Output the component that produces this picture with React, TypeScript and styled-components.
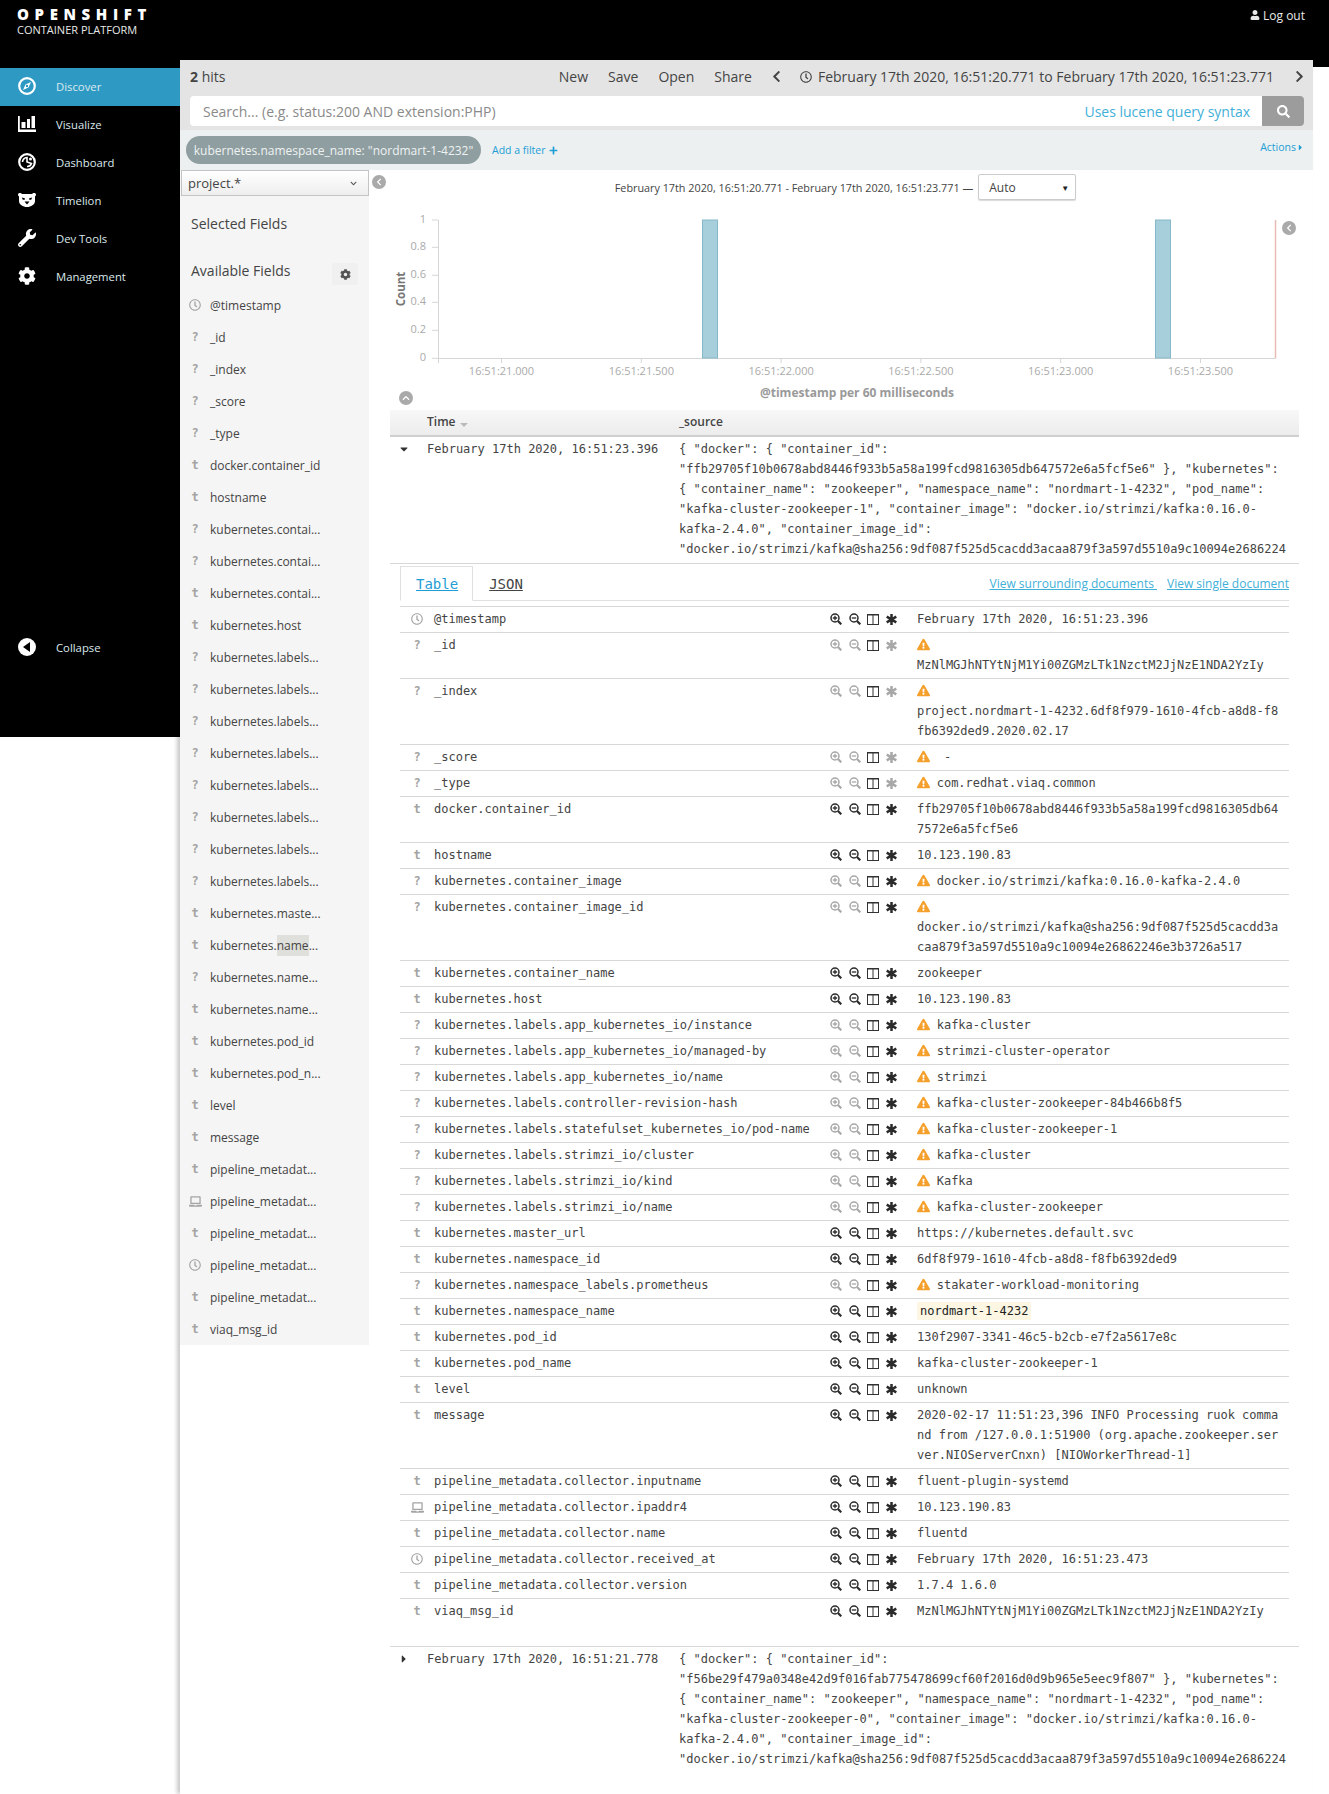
import React from 'react';
import styled, { createGlobalStyle } from 'styled-components';
import {
  FaCaretDown, FaCaretRight, FaChevronDown, FaChevronLeft, FaChevronRight,
  FaCog, FaExclamationTriangle, FaLaptop, FaPlus, FaRegClock, FaSearch, FaUser, FaWrench,
} from 'react-icons/fa';

const MONO = '"DejaVu Sans Mono", monospace';

const Global = createGlobalStyle`
  html, body { margin: 0; padding: 0; background: #fff; }
  body { font-family: "Open Sans", sans-serif; color: #444; font-size: 12px; }
  * { box-sizing: border-box; }
`;

const Page = styled.div`width: 1329px; height: 1794px; display: flex; flex-direction: column; overflow: hidden;`;
const TopBar = styled.header`
  height: 60px; flex: none; background: #000; color: #fff; display: flex; justify-content: space-between; position: relative;
  &::after { content: ''; position: absolute; right: 0; top: 60px; width: 16px; height: 7px; background: #000; }
`;
const Logo = styled.div`padding: 5px 0 0 17px;`;
const LogoMain = styled.div`font-weight: 800; font-size: 15px; letter-spacing: 5.6px; line-height: 18px;`;
const LogoSub = styled.div`font-size: 11px; line-height: 13px; color: #e8e8e8;`;
const Logout = styled.div`display: flex; align-items: center; gap: 3px; font-size: 12px; color: #e8e8e8; padding: 3px 24px 0 0; height: 27px;`;

const Body = styled.div`display: flex; align-items: flex-start; flex: 1;`;
const Nav = styled.nav`
  width: 180px; height: 677px; background: #000; padding-top: 8px; position: relative; z-index: 2; flex: none;
`;
const NavItem = styled.div<{ $active?: boolean }>`
  height: 38px; padding-bottom: 2px; display: grid; grid-template-columns: 56px 1fr; align-items: center; color: #dce9ee; font-size: 11.3px;
  background: ${p => (p.$active ? '#2e9ac4' : 'transparent')};
  svg { margin-left: 18px; display: block; }
`;
const NavCollapse = styled(NavItem)`margin-top: 333px;`;

const Content = styled.main`width: 1133px; flex: none; box-shadow: -3px 0 4px rgba(0,0,0,.22); height: 1734px; background: #fff;`;
const ToolRow = styled.div`height: 36px; background: #e4e4e4; display: flex; align-items: center; padding: 0 7px 3px 10px; font-size: 14px; color: #444;`;
const Hits = styled.div`flex: 1; b { font-weight: 700; }`;
const ToolLink = styled.span`margin-right: 20px;`;
const ShareLink = styled(ToolLink)`margin-right: 18px;`;
const ToolChevron = styled.span`display: flex; color: #444;`;
const TimeRange = styled.span`display: flex; align-items: center; gap: 6px; margin: 0 19px 0 17px;`;
const SearchRow = styled.div`background: #e4e4e4; padding: 0 9px 4px 10px; height: 34px;`;
const SearchBox = styled.div`height: 30px; background: #fff; border-radius: 4px; display: flex; align-items: center;`;
const Placeholder = styled.span`flex: 1; padding-left: 13px; font-size: 14px; color: #8a8a8a;`;
const Lucene = styled.span`font-size: 14px; color: #3fb0d8; margin-right: 12px;`;
const SearchBtn = styled.span`width: 42px; height: 30px; background: #9c9c9c; color: #fff; display: flex; align-items: center; justify-content: center; border-radius: 0 4px 4px 0;`;
const FilterBar = styled.div`height: 40px; background: #ecf0f1; display: flex; align-items: center; padding: 0 8px 0 6px;`;
const Pill = styled.span`height: 28px; width: 295px; border-radius: 14px; background: #8f9ea0; color: #eef2f3; font-size: 12px; display: flex; align-items: center; justify-content: center; white-space: nowrap;`;
const AddFilter = styled.span`margin-left: 11px; font-size: 10.5px; color: #1f9ed6; display: flex; align-items: center; gap: 3px; flex: 1;`;
const Actions = styled.span`font-size: 10.5px; color: #1f9ed6; display: flex; align-items: center; margin-top: -6px;`;

const Split = styled.div`display: flex; align-items: flex-start;`;
const Side = styled.aside`width: 189px; flex: none; background: #f5f5f5; height: 1175px;`;
const IndexSelect = styled.div`
  height: 26px; margin-left: 1px; border: 1px solid #c4c4c4; background: linear-gradient(#fff, #eee); color: #444;
  display: flex; align-items: center; justify-content: space-between; padding: 0 11px 0 6px; font-size: 13px;
`;
const SideTitle = styled.div`font-size: 14px; line-height: 20px; height: 20px; padding-left: 11px; color: #444; display: flex; justify-content: space-between; align-items: center;`;
const SelectedTitle = styled(SideTitle)`margin-top: 18px;`;
const AvailableTitle = styled(SideTitle)`margin-top: 27px; margin-bottom: 8px; padding-right: 11px;`;
const GearBtn = styled.span`width: 26px; height: 22px; margin-top: 6px; background: #f0f0f0; border-radius: 3px; display: flex; align-items: center; justify-content: center; color: #555;`;
const FieldList = styled.div`display: flex; flex-direction: column;`;
const FieldItem = styled.div`height: 32px; display: grid; grid-template-columns: 30px 1fr; align-items: center; font-size: 12px; color: #444;`;
const TypeMark = styled.span`display: flex; justify-content: center; font-family: ${MONO}; font-size: 12px; font-weight: 700; color: #a4a4a4; line-height: 20px; height: 20px; align-items: center;`;
const FieldHl = styled.span`display: inline-block; background: #dfdfdb; line-height: 21px; width: 32px;`;

const Main = styled.div`flex: 1; min-width: 0; padding: 0 14px 0 21px; position: relative;`;
const RoundBtn = styled.span`
  position: absolute; width: 14px; height: 14px; border-radius: 50%; background: #aaa; color: #fff;
  display: flex; align-items: center; justify-content: center;
`;
const CollapseLeft = styled(RoundBtn)`left: 3px; top: 5px;`;
const CollapseRight = styled(RoundBtn)`right: 17px; top: 51px;`;
const CollapseUp = styled(RoundBtn)`left: 30px; top: 221px;`;
const ChartHead = styled.div`height: 34px; padding-left: 2px; display: flex; justify-content: center; align-items: center; font-size: 10.8px; gap: 3px; color: #444;`;
const IntervalSelect = styled.div`
  width: 98px; height: 26px; margin-left: 2px; border: 1px solid #ccc; border-radius: 2px; box-shadow: 0 1px 1px rgba(0,0,0,.15); background: #fff; font-size: 12px;
  display: flex; align-items: center; justify-content: space-between; padding: 0 6px 0 10px;
  span { font-size: 8px; color: #222; }
`;
const Chart = styled.svg`display: block; width: 909px; height: 206px;`;

const TableHead = styled.div`
  height: 27px; padding-bottom: 2px; display: grid; grid-template-columns: 37px 252px 1fr; align-items: center; font-size: 12px; font-weight: 600; color: #444;
  background: linear-gradient(#f8f8f8, #ececec); border-bottom: 2px solid #cfcfcf;
`;
const SortArrow = styled.span`display: inline-block; margin-left: 4px; width: 0; height: 0; border: 4px solid transparent; border-top: 4px solid #bbb; border-bottom-width: 0; vertical-align: -1px;`;
const DocRow = styled.div`display: grid; grid-template-columns: 37px 252px 1fr; padding: 2px 0 4px; font-family: ${MONO}; font-size: 12px; line-height: 20px; color: #444; border-bottom: 1px solid #d8d8d8;`;
const DocRowPlain = styled(DocRow)`border-bottom: 0; border-top: 1px solid #d8d8d8;`;
const SourceText = styled.span`padding-right: 10px;`;
const Caret = styled.span`display: flex; align-items: center; padding-left: 8px; height: 20px; color: #333;`;
const Detail = styled.div`padding: 2px 10px 0; height: 1082px;`;
const TabsRow = styled.div`height: 35px; display: flex; align-items: stretch; border-bottom: 1px solid #e0e0e0; margin-bottom: 5px;`;
const Tab = styled.span<{ $active?: boolean }>`
  font-family: ${MONO}; font-size: 14px; text-decoration: underline; display: flex; align-items: center; height: 35px;
  padding: ${p => (p.$active ? '0 14px 0 15px' : '0 15px')};
  color: ${p => (p.$active ? '#1f9ed6' : '#444')};
  border: 1px solid ${p => (p.$active ? '#e0e0e0' : 'transparent')};
  border-bottom: ${p => (p.$active ? '1px solid #fff' : '0')};
`;
const TabLinks = styled.div`margin-left: auto; display: flex; gap: 10px; align-items: center; font-size: 12px; color: #3fb0d8; text-decoration: underline; white-space: pre;`;
const DetailRow = styled.div`
  display: grid; grid-template-columns: 34px 396px 87px 1fr; border-top: 1px solid #d8d8d8; padding: 2px 0 3px;
  font-family: ${MONO}; font-size: 12px; line-height: 20px; color: #444;
`;
const FieldName = styled.span`white-space: nowrap;`;
const IconGroup = styled.span`display: flex; align-items: center; height: 20px;`;
const IconSlot = styled.span<{ $dim?: boolean }>`display: flex; width: 18.6px; color: ${p => (p.$dim ? '#a8a8a8' : '#2b2b2b')}; svg { display: block; }`;
const Value = styled.span`display: block; width: 362px;`;
const ValueText = styled.span`display: inline-block; max-width: 100%; word-break: break-all; white-space: pre-wrap; vertical-align: top;`;
const Warn = styled.span`display: inline-block; width: 19.7px; height: 20px; color: #f5a02c; vertical-align: top; padding-top: 3px; svg { display: block; }`;
const Mark = styled.span`display: inline-block; background: #fcf6e3; color: #222; padding: 0 3px; line-height: 18px; margin-top: 1px;`;

/* drawings */
const CompassIcon = () => (
  <svg width="18" height="18" viewBox="0 0 18 18" fill="none">
    <circle cx="9" cy="9" r="7.8" stroke="#fff" strokeWidth="2.2" />
    <path d="M13 5l-2.500 5.500L5 13l2.500-5.500z" fill="#fff" />
    <circle cx="9" cy="9" r="1.200" fill="#2e9ac4" />
  </svg>
);
const BarsIcon = () => (
  <svg width="18" height="16" viewBox="0 0 18 16" fill="#fff">
    <path d="M0 0h1.800v13.500H18V16H0z" />
    <path d="M3.500 6h4v6h-4zM9 3h3v9H9zM13.500 0h3.500v12h-3.500z" />
  </svg>
);
const DashIcon = () => (
  <svg width="18" height="18" viewBox="0 0 18 18" fill="none">
    <circle cx="9" cy="9" r="7.800" stroke="#fff" strokeWidth="2.200" />
    <circle cx="12.500" cy="6" r="1.500" fill="#fff" />
    <path d="M4.500 9A4.500 4.500 0 0 1 9 4.500V9l4.500 1.500A4.500 4.500 0 0 1 9 13.500" stroke="#fff" strokeWidth="1.600" />
  </svg>
);
const BearIcon = () => (
  <svg width="18" height="14" viewBox="0 0 18 14">
    <path d="M0 1.500C0 .5 1 0 2 0c1 0 1.500.5 2 1h10c.5-.5 1-1 2-1s2 .5 2 1.500c0 1-.5 1.500-1 2V8c0 3.500-4 6-8 6S1 11.500 1 8V3.500C.5 3 0 2.500 0 1.500z" fill="#fff" />
    <path d="M3.800 4.500l3 .8v1.500h-2zM14.200 4.500l-3 .8v1.500h2z" fill="#000" />
    <path d="M6.500 8.500h5L9 11.500z" fill="#000" />
  </svg>
);
const CollapseIcon = () => (
  <svg width="18" height="18" viewBox="0 0 18 18">
    <circle cx="9" cy="9" r="9" fill="#fff" />
    <path d="M5 9l7-5v10z" fill="#000" />
  </svg>
);
const ZoomIcon = ({ plus }: { plus?: boolean }) => (
  <svg width="12" height="12" viewBox="0 0 12 12" fill="none" stroke="currentColor">
    <circle cx="5" cy="5" r="4" strokeWidth="1.500" />
    <path d="M8 8l3.300 3.300" strokeWidth="2.200" />
    <path d={plus ? 'M2.800 5h4.400M5 2.800v4.400' : 'M2.800 5h4.400'} strokeWidth="1.300" />
  </svg>
);
const ColumnsIcon = () => (
  <svg width="12" height="11" viewBox="0 0 12 11" fill="none" stroke="#333" strokeWidth="1">
    <rect x=".5" y=".5" width="11" height="10" />
    <path d="M6 .5v10" />
    <path d="M.5 1h11" />
  </svg>
);
const StarIcon = () => (
  <svg width="11" height="11" viewBox="0 0 11 11" fill="none" stroke="currentColor" strokeWidth="2.500">
    <path d="M5.500 0v11M.7 2.700l9.600 5.600M.7 8.300l9.600-5.600" />
  </svg>
);

type Kind = 't' | '?' | 'clock' | 'laptop';
const KindIcon = ({ kind }: { kind: Kind }) => (
  <TypeMark>
    {kind === 'clock' ? <FaRegClock size={12} /> : kind === 'laptop' ? <FaLaptop size={13} /> : kind}
  </TypeMark>
);

const sideFields: [Kind, string][] = [
  ['clock', '@timestamp'], ['?', '_id'], ['?', '_index'], ['?', '_score'], ['?', '_type'],
  ['t', 'docker.container_id'], ['t', 'hostname'], ['?', 'kubernetes.contai...'], ['?', 'kubernetes.contai...'],
  ['t', 'kubernetes.contai...'], ['t', 'kubernetes.host'],
  ['?', 'kubernetes.labels...'], ['?', 'kubernetes.labels...'], ['?', 'kubernetes.labels...'], ['?', 'kubernetes.labels...'],
  ['?', 'kubernetes.labels...'], ['?', 'kubernetes.labels...'], ['?', 'kubernetes.labels...'], ['?', 'kubernetes.labels...'],
  ['t', 'kubernetes.maste...'], ['t', 'HL'], ['?', 'kubernetes.name...'], ['t', 'kubernetes.name...'],
  ['t', 'kubernetes.pod_id'], ['t', 'kubernetes.pod_n...'], ['t', 'level'], ['t', 'message'],
  ['t', 'pipeline_metadat...'], ['laptop', 'pipeline_metadat...'], ['t', 'pipeline_metadat...'],
  ['clock', 'pipeline_metadat...'], ['t', 'pipeline_metadat...'], ['t', 'viaq_msg_id'],
];

type Row = { k: Kind; n: string; v: string; warn?: boolean; dim?: boolean; dimStar?: boolean; mark?: boolean };
const MSG = 'MzNlMGJhNTYtNjM1Yi00ZGMzLTk1NzctM2JjNzE1NDA2YzIy';
const L = 'kubernetes.labels.';
const rows: Row[] = [
  { k: 'clock', n: '@timestamp', v: 'February 17th 2020, 16:51:23.396' },
  { k: '?', n: '_id', v: MSG, warn: true, dim: true, dimStar: true },
  { k: '?', n: '_index', v: 'project.nordmart-1-4232.6df8f979-1610-4fcb-a8d8-f8fb6392ded9.2020.02.17', warn: true, dim: true, dimStar: true },
  { k: '?', n: '_score', v: ' -', warn: true, dim: true, dimStar: true },
  { k: '?', n: '_type', v: 'com.redhat.viaq.common', warn: true, dim: true, dimStar: true },
  { k: 't', n: 'docker.container_id', v: 'ffb29705f10b0678abd8446f933b5a58a199fcd9816305db647572e6a5fcf5e6' },
  { k: 't', n: 'hostname', v: '10.123.190.83' },
  { k: '?', n: 'kubernetes.container_image', v: 'docker.io/strimzi/kafka:0.16.0-kafka-2.4.0', warn: true, dim: true },
  { k: '?', n: 'kubernetes.container_image_id', v: 'docker.io/strimzi/kafka@sha256:9df087f525d5cacdd3acaa879f3a597d5510a9c10094e26862246e3b3726a517', warn: true, dim: true },
  { k: 't', n: 'kubernetes.container_name', v: 'zookeeper' },
  { k: 't', n: 'kubernetes.host', v: '10.123.190.83' },
  { k: '?', n: L + 'app_kubernetes_io/instance', v: 'kafka-cluster', warn: true, dim: true },
  { k: '?', n: L + 'app_kubernetes_io/managed-by', v: 'strimzi-cluster-operator', warn: true, dim: true },
  { k: '?', n: L + 'app_kubernetes_io/name', v: 'strimzi', warn: true, dim: true },
  { k: '?', n: L + 'controller-revision-hash', v: 'kafka-cluster-zookeeper-84b466b8f5', warn: true, dim: true },
  { k: '?', n: L + 'statefulset_kubernetes_io/pod-name', v: 'kafka-cluster-zookeeper-1', warn: true, dim: true },
  { k: '?', n: L + 'strimzi_io/cluster', v: 'kafka-cluster', warn: true, dim: true },
  { k: '?', n: L + 'strimzi_io/kind', v: 'Kafka', warn: true, dim: true },
  { k: '?', n: L + 'strimzi_io/name', v: 'kafka-cluster-zookeeper', warn: true, dim: true },
  { k: 't', n: 'kubernetes.master_url', v: 'https://kubernetes.default.svc' },
  { k: 't', n: 'kubernetes.namespace_id', v: '6df8f979-1610-4fcb-a8d8-f8fb6392ded9' },
  { k: '?', n: 'kubernetes.namespace_labels.prometheus', v: 'stakater-workload-monitoring', warn: true, dim: true },
  { k: 't', n: 'kubernetes.namespace_name', v: 'nordmart-1-4232', mark: true },
  { k: 't', n: 'kubernetes.pod_id', v: '130f2907-3341-46c5-b2cb-e7f2a5617e8c' },
  { k: 't', n: 'kubernetes.pod_name', v: 'kafka-cluster-zookeeper-1' },
  { k: 't', n: 'level', v: 'unknown' },
  { k: 't', n: 'message', v: '2020-02-17 11:51:23,396 INFO Processing ruok command from /127.0.0.1:51900 (org.apache.zookeeper.server.NIOServerCnxn) [NIOWorkerThread-1]' },
  { k: 't', n: 'pipeline_metadata.collector.inputname', v: 'fluent-plugin-systemd' },
  { k: 'laptop', n: 'pipeline_metadata.collector.ipaddr4', v: '10.123.190.83' },
  { k: 't', n: 'pipeline_metadata.collector.name', v: 'fluentd' },
  { k: 'clock', n: 'pipeline_metadata.collector.received_at', v: 'February 17th 2020, 16:51:23.473' },
  { k: 't', n: 'pipeline_metadata.collector.version', v: '1.7.4 1.6.0' },
  { k: 't', n: 'viaq_msg_id', v: MSG },
];

const source = (id: string, pod: string) =>
  `{ "docker": { "container_id": "${id}" }, "kubernetes": { "container_name": "zookeeper", "namespace_name": "nordmart-1-4232", "pod_name": "${pod}", "container_image": "docker.io/strimzi/kafka:0.16.0-kafka-2.4.0", "container_image_id": "docker.io/strimzi/kafka@sha256:9df087f525d5cacdd3acaa879f3a597d5510a9c10094e2686224`;

const yTicks: [string, number][] = [['1', 16], ['0.8', 43.3], ['0.6', 71.3], ['0.4', 98.3], ['0.2', 126.3], ['0', 154.3]];
const xTicks = ['16:51:21.000', '16:51:21.500', '16:51:22.000', '16:51:22.500', '16:51:23.000', '16:51:23.500'];

const ChartDrawing = () => (
  <Chart viewBox="0 0 909 206">
    <g stroke="#d6d6d6" fill="none">
      <path d="M48.500 16v138.500H886" />
      {yTicks.map(([l, y]) => <path key={l} d={`M42 ${y}h6`} />)}
      <path d="M48.500 154v5" />
      {xTicks.map((t, i) => <path key={t} d={`M${111.5 + i * 139.8} 154v5`} />)}
    </g>
    <rect x="312.500" y="16" width="15" height="138" fill="#a7cedb" stroke="#86b8c9" />
    <rect x="765.500" y="16" width="15" height="138" fill="#a7cedb" stroke="#86b8c9" />
    <path d="M885.500 16v138" stroke="#e8bcb5" strokeWidth="1.500" />
    <g fontFamily="Open Sans" fontSize="11" fill="#aaa">
      {yTicks.map(([l, y]) => <text key={l} x="36" y={y + 3} textAnchor="end">{l}</text>)}
      {xTicks.map((t, i) => <text key={t} x={111.5 + i * 139.8} y="171" textAnchor="middle">{t}</text>)}
    </g>
    <text x="0" y="0" transform="translate(15 85) rotate(-90)" textAnchor="middle" fontFamily="Open Sans" fontSize="11.5" fontWeight="700" fill="#777">Count</text>
    <text x="467" y="193" textAnchor="middle" fontFamily="Open Sans" fontSize="12" fontWeight="700" fill="#999">@timestamp per 60 milliseconds</text>
  </Chart>
);

export default function App() {
  return (
    <Page>
      <Global />
      <TopBar>
        <Logo>
          <LogoMain>OPENSHIFT</LogoMain>
          <LogoSub>CONTAINER PLATFORM</LogoSub>
        </Logo>
        <Logout><FaUser size={10} />Log out</Logout>
      </TopBar>
      <Body>
        <Nav>
          <NavItem $active><CompassIcon /><span>Discover</span></NavItem>
          <NavItem><BarsIcon /><span>Visualize</span></NavItem>
          <NavItem><DashIcon /><span>Dashboard</span></NavItem>
          <NavItem><BearIcon /><span>Timelion</span></NavItem>
          <NavItem><FaWrench size={18} color="#fff" /><span>Dev Tools</span></NavItem>
          <NavItem><FaCog size={18} color="#fff" /><span>Management</span></NavItem>
          <NavCollapse><CollapseIcon /><span>Collapse</span></NavCollapse>
        </Nav>
        <Content>
          <ToolRow>
            <Hits><b>2</b> hits</Hits>
            <ToolLink>New</ToolLink>
            <ToolLink>Save</ToolLink>
            <ToolLink>Open</ToolLink>
            <ShareLink>Share</ShareLink>
            <ToolChevron><FaChevronLeft size={13} /></ToolChevron>
            <TimeRange><FaRegClock size={12} />February 17th 2020, 16:51:20.771 to February 17th 2020, 16:51:23.771</TimeRange>
            <ToolChevron><FaChevronRight size={13} /></ToolChevron>
          </ToolRow>
          <SearchRow>
            <SearchBox>
              <Placeholder>Search... (e.g. status:200 AND extension:PHP)</Placeholder>
              <Lucene>Uses lucene query syntax</Lucene>
              <SearchBtn><FaSearch size={13} /></SearchBtn>
            </SearchBox>
          </SearchRow>
          <FilterBar>
            <Pill>kubernetes.namespace_name: "nordmart-1-4232"</Pill>
            <AddFilter>Add a filter <FaPlus size={9} /></AddFilter>
            <Actions>Actions<FaCaretRight size={9} /></Actions>
          </FilterBar>
          <Split>
            <Side>
              <IndexSelect>project.*<FaChevronDown size={7} color="#555" /></IndexSelect>
              <SelectedTitle>Selected Fields</SelectedTitle>
              <AvailableTitle>Available Fields<GearBtn><FaCog size={11} /></GearBtn></AvailableTitle>
              <FieldList>
                {sideFields.map(([k, n], i) => (
                  <FieldItem key={i}>
                    <KindIcon kind={k} />
                    {n === 'HL' ? <span>kubernetes.<FieldHl>name</FieldHl>...</span> : <span>{n}</span>}
                  </FieldItem>
                ))}
              </FieldList>
            </Side>
            <Main>
              <CollapseLeft><FaChevronLeft size={8} /></CollapseLeft>
              <CollapseRight><FaChevronLeft size={8} /></CollapseRight>
              <CollapseUp><FaChevronDown size={8} style={{ transform: 'rotate(180deg)' }} /></CollapseUp>
              <ChartHead>
                February 17th 2020, 16:51:20.771 - February 17th 2020, 16:51:23.771 —
                <IntervalSelect>Auto<span>▼</span></IntervalSelect>
              </ChartHead>
              <ChartDrawing />
              <TableHead>
                <span />
                <span>Time<SortArrow /></span>
                <span>_source</span>
              </TableHead>
              <DocRow>
                <Caret><FaCaretDown size={12} /></Caret>
                <span>February 17th 2020, 16:51:23.396</span>
                <SourceText>{source('ffb29705f10b0678abd8446f933b5a58a199fcd9816305db647572e6a5fcf5e6', 'kafka-cluster-zookeeper-1')}</SourceText>
              </DocRow>
              <Detail>
                <TabsRow>
                  <Tab $active>Table</Tab>
                  <Tab>JSON</Tab>
                  <TabLinks><span>View surrounding documents </span><span>View single document</span></TabLinks>
                </TabsRow>
                {rows.map(r => (
                  <DetailRow key={r.n}>
                    <KindIcon kind={r.k} />
                    <FieldName>{r.n}</FieldName>
                    <IconGroup>
                      <IconSlot $dim={r.dim}><ZoomIcon plus /></IconSlot>
                      <IconSlot $dim={r.dim}><ZoomIcon /></IconSlot>
                      <IconSlot><ColumnsIcon /></IconSlot>
                      <IconSlot $dim={r.dimStar}><StarIcon /></IconSlot>
                    </IconGroup>
                    <Value>
                      {r.warn && <Warn><FaExclamationTriangle size={13} /></Warn>}
                      {r.mark ? <Mark>{r.v}</Mark> : <ValueText>{r.v}</ValueText>}
                    </Value>
                  </DetailRow>
                ))}
              </Detail>
              <DocRowPlain>
                <Caret><FaCaretRight size={12} /></Caret>
                <span>February 17th 2020, 16:51:21.778</span>
                <SourceText>{source('f56be29f479a0348e42d9f016fab775478699cf60f2016d0d9b965e5eec9f807', 'kafka-cluster-zookeeper-0')}</SourceText>
              </DocRowPlain>
            </Main>
          </Split>
        </Content>
      </Body>
    </Page>
  );
}
